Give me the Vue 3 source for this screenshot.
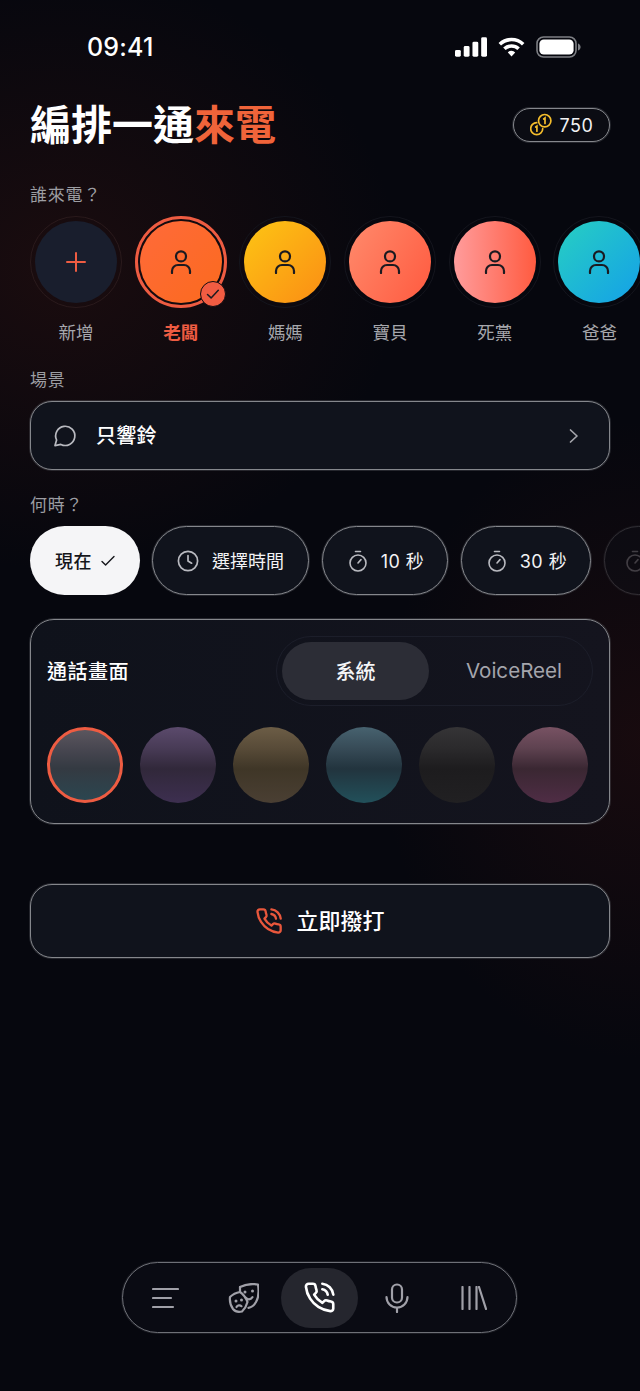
<script setup>
const contacts = [
  { name: '老闆', cls: 'boss', selected: true },
  { name: '媽媽', cls: 'mom' },
  { name: '寶貝', cls: 'baby' },
  { name: '死黨', cls: 'buddy' },
  { name: '爸爸', cls: 'dad' },
]
const timers = ['10 秒', '30 秒']
const swatches = ['teal', 'violet', 'brown', 'sea', 'dark', 'plum']
const phone = 'M22 16.92v3a2 2 0 0 1-2.18 2 19.79 19.79 0 0 1-8.63-3.07 19.5 19.5 0 0 1-6-6 19.79 19.79 0 0 1-3.07-8.67A2 2 0 0 1 4.11 2h3a2 2 0 0 1 2 1.72 12.84 12.84 0 0 0 .7 2.81 2 2 0 0 1-.45 2.11L8.09 9.91a16 16 0 0 0 6 6l1.27-1.27a2 2 0 0 1 2.11-.45 12.84 12.84 0 0 0 2.81.7A2 2 0 0 1 22 16.92zM14.05 2a9 9 0 0 1 8 7.94M14.05 6A5 5 0 0 1 18 10'
</script>

<template>
  <div class="page">
    <!-- status bar -->
    <div class="status">
      <span class="time">09:41</span>
      <div class="status-icons">
        <svg width="32" height="20" viewBox="0 0 33 20" fill="#fff">
          <rect x="0" y="13" width="6" height="7" rx="1.5" />
          <rect x="9" y="9" width="6" height="11" rx="1.5" />
          <rect x="18" y="4.5" width="6" height="15.5" rx="1.5" />
          <rect x="27" y="0" width="6" height="20" rx="1.5" />
        </svg>
        <svg width="27" height="20" viewBox="0 0 27 20" fill="none" stroke="#fff" stroke-width="3.6">
          <path d="M1.8 7.2a17 17 0 0 1 23.4 0" />
          <path d="M6.4 11.8a10.4 10.4 0 0 1 14.2 0" />
          <path d="M13.5 19.4l-3.7-4a5.2 5.2 0 0 1 7.4 0z" fill="#fff" stroke="none" />
        </svg>
        <svg width="45" height="22" viewBox="0 0 45 22" fill="none">
          <rect x="1" y="1" width="39" height="20" rx="6.5" stroke="#7d7f84" stroke-width="1.6" />
          <rect x="3.4" y="3.4" width="34.2" height="15.2" rx="4.4" fill="#fff" />
          <path d="M42 7.5v7c1.6-.5 2.6-2 2.6-3.5S43.6 8 42 7.5z" fill="#7d7f84" />
        </svg>
      </div>
    </div>

    <div class="header">
      <h1 class="title">編排一通<em>來電</em></h1>
      <div class="coins outlined">
        <svg width="24" height="24" viewBox="0 0 24 24" fill="none" stroke="#f4bd2c" stroke-width="1.7" stroke-linecap="round">
          <circle cx="14.7" cy="7.7" r="6.2" />
          <path d="M13.7 6l1.3-1v5.5" />
          <path d="M6.7 9.7A6 6 0 1 0 12.7 15.7" />
          <path d="M5.7 14l1.2-.8v5" />
        </svg>
        <span>750</span>
      </div>
    </div>

    <div class="label who">誰來電？</div>
    <div class="avatars">
      <div class="contact">
        <div class="ring">
          <div class="face add">
            <svg width="22" height="22" viewBox="0 0 22 22" stroke="#ee5c42" stroke-width="2" stroke-linecap="round">
              <path d="M11 2v18M2 11h18" />
            </svg>
          </div>
        </div>
        <span class="name">新增</span>
      </div>
      <div v-for="c in contacts" :key="c.name" class="contact" :class="{ on: c.selected }">
        <div class="ring">
          <div class="face" :class="c.cls">
            <svg width="24" height="24" viewBox="0 0 24 24" fill="none" stroke="#1b1a20" stroke-width="2.2" stroke-linecap="round">
              <circle cx="12" cy="6.4" r="5" />
              <path d="M3 23v-2a6 6 0 0 1 6-6h6a6 6 0 0 1 6 6v2" />
            </svg>
          </div>
          <span v-if="c.selected" class="tick">
            <svg width="16" height="16" viewBox="0 0 16 16" fill="none" stroke="#1b1a20" stroke-width="1.5" stroke-linecap="round" stroke-linejoin="round">
              <path d="M2.5 8.5l3.6 3.4 7.2-7.6" />
            </svg>
          </span>
        </div>
        <span class="name">{{ c.name }}</span>
      </div>
    </div>

    <div class="label scene">場景</div>
    <div class="select outlined">
      <svg width="24" height="24" viewBox="0 0 24 24" fill="none" stroke="#b9bac0" stroke-width="1.7" stroke-linejoin="round">
        <path d="M7.9 20.4A9.6 9.6 0 1 0 3.6 16L2 21.6z" />
      </svg>
      <span class="select-text">只響鈴</span>
      <svg class="chev" width="12" height="16" viewBox="0 0 12 16" fill="none" stroke="#a4a5ab" stroke-width="1.7" stroke-linecap="round" stroke-linejoin="round">
        <path d="M2.5 2l6.5 6-6.5 6" />
      </svg>
    </div>

    <div class="label when">何時？</div>
    <div class="chips">
      <div class="chip now">
        <span class="chip-text">現在</span>
        <svg width="14" height="12" viewBox="0 0 14 12" fill="none" stroke="#16171c" stroke-width="1.4" stroke-linecap="round" stroke-linejoin="round">
          <path d="M1 6.5l3.6 3.6L13 1.6" />
        </svg>
      </div>
      <div class="chip outlined pick">
        <svg width="22" height="22" viewBox="0 0 22 22" fill="none" stroke="#b9bac0" stroke-width="1.7" stroke-linecap="round" stroke-linejoin="round">
          <circle cx="11" cy="11" r="9.6" />
          <path d="M11 5.5V11l3.6 2.2" />
        </svg>
        <span class="chip-text">選擇時間</span>
      </div>
      <div v-for="t in timers" :key="t" class="chip outlined timer">
        <svg width="20" height="22" viewBox="0 0 20 22" fill="none" stroke="#b9bac0" stroke-width="1.6" stroke-linecap="round">
          <circle cx="10" cy="13" r="8" />
          <path d="M7.5 1.5h5M10 13l3-3.4" />
        </svg>
        <span class="chip-text">{{ t }}</span>
      </div>
      <div class="chip outlined faded">
        <svg width="20" height="22" viewBox="0 0 20 22" fill="none" stroke="#b9bac0" stroke-width="1.6" stroke-linecap="round">
          <circle cx="10" cy="13" r="8" />
          <path d="M7.5 1.5h5M10 13l3-3.4" />
        </svg>
      </div>
    </div>

    <div class="card outlined">
      <div class="card-top">
        <span class="card-title">通話畫面</span>
        <div class="segment">
          <span class="seg active"><span class="seg-text">系統</span></span>
          <span class="seg voice"><span class="seg-text">VoiceReel</span></span>
        </div>
      </div>
      <div class="swatches">
        <div v-for="(s, i) in swatches" :key="s" class="swatch" :class="[s, { picked: i === 0 }]"></div>
      </div>
    </div>

    <div class="call outlined">
      <svg width="28" height="28" viewBox="0 0 24 24" fill="none" stroke="#e9573c" stroke-width="2" stroke-linecap="round" stroke-linejoin="round">
        <path :d="phone" />
      </svg>
      <span class="call-text">立即撥打</span>
    </div>

    <nav class="nav">
      <div class="tab">
        <svg width="27" height="22" viewBox="0 0 27 22" stroke="#a0a0a8" stroke-width="2.2" stroke-linecap="round">
          <path d="M1 2h25M1 11h18M1 20h20" />
        </svg>
      </div>
      <div class="tab">
        <svg width="32" height="30" viewBox="0 0 32 30" fill="none" stroke="#a0a0a8" stroke-width="2.2" stroke-linecap="round" stroke-linejoin="round">
          <path d="M13 4C18 1.500 25 .5 31 1.500 32 8 31.500 15 29 19 27 22.500 24 24.500 21.500 24.800" />
          <path d="M13 4v5" />
          <path d="M3 14C6 11 10 9.500 13 9c3 2 6 6 7.500 10-1 4-3 7-5.500 9.500-4 1-7 0-9-2.500C3.500 22.500 2.500 18 3 14z" />
          <path d="M18.500 14.500c2 2.500 5 2.500 7-.3M9.500 24c1-1.800 3.500-2.200 5-.8" />
          <g fill="#a0a0a8" stroke="none">
            <circle cx="18" cy="9" r="1.500" />
            <circle cx="25.500" cy="8" r="1.500" />
            <circle cx="9" cy="18" r="1.500" />
            <circle cx="14.500" cy="17" r="1.500" />
          </g>
        </svg>
      </div>
      <div class="tab active">
        <svg width="33" height="33" viewBox="0 0 24 24" fill="none" stroke="#fff" stroke-width="1.9" stroke-linecap="round" stroke-linejoin="round">
          <path :d="phone" />
        </svg>
      </div>
      <div class="tab">
        <svg width="24" height="30" viewBox="0 0 24 30" fill="none" stroke="#a0a0a8" stroke-width="2.2" stroke-linecap="round">
          <rect x="7" y="1.500" width="10" height="18" rx="5" />
          <path d="M1.500 14a10.500 10.500 0 0 0 21 0M12 24.500v4.500" />
        </svg>
      </div>
      <div class="tab">
        <svg width="26" height="24" viewBox="0 0 26 24" fill="none" stroke="#a0a0a8" stroke-width="2.2" stroke-linecap="round">
          <path d="M1.500 1v22M8.500 1v22M15.500 1v22M18 1l7 22" />
        </svg>
      </div>
    </nav>
  </div>
</template>

<style>
html, body {
  margin: 0;
  background: #06070e;
}
</style>

<style scoped>
.page {
  width: 640px;
  height: 1391px;
  overflow: hidden;
  display: flex;
  flex-direction: column;
  box-sizing: border-box;
  color: #fff;
  font-family: "Inter", "Noto Sans CJK TC", sans-serif;
  background:
    radial-gradient(ellipse 340px 300px at 60px 270px, rgba(74, 24, 16, 0.3), transparent 100%),
    radial-gradient(ellipse 260px 320px at 640px 740px, rgba(80, 22, 16, 0.24), transparent 100%),
    #06070e;
}
.outlined {
  border: 1px solid #85878c;
  box-shadow: 0 0 0 1px rgba(110, 112, 118, 0.3);
}
.status {
  height: 94px;
  flex: none;
  display: flex;
  align-items: center;
  justify-content: space-between;
  padding: 0 59px 0 87px;
}
.time {
  font-size: 25px;
  font-weight: 500;
  letter-spacing: 0.2px;
}
.status-icons {
  display: flex;
  align-items: center;
  gap: 11px;
}
.header {
  height: 62px;
  flex: none;
  display: flex;
  align-items: center;
  justify-content: space-between;
  padding: 0 30px;
}
.title {
  margin: 0;
  font-size: 41px;
  font-weight: 700;
  line-height: 62px;
}
.title em {
  font-style: normal;
  color: #f0643a;
}
.coins {
  height: 34px;
  box-sizing: border-box;
  width: 97px;
  border-radius: 17px;
  display: flex;
  align-items: center;
  justify-content: center;
  gap: 6px;
  font-size: 18px;
  letter-spacing: 0.5px;
  color: #f2f2f4;
  background: #0b0c13;
}
.label {
  font-size: 17px;
  line-height: 24px;
  letter-spacing: 0.8px;
  color: #9c9da2;
  padding-left: 30px;
  flex: none;
}
.who { margin-top: 27px; }
.scene { margin-top: 23px; }
.when { margin-top: 23px; }
.avatars {
  flex: none;
  margin-top: 9px;
  padding-left: 30px;
  display: flex;
  gap: 12.7px;
  overflow: hidden;
}
.contact {
  flex: none;
  width: 92px;
  display: flex;
  flex-direction: column;
  align-items: center;
}
.ring {
  position: relative;
  width: 92px;
  height: 92px;
  box-sizing: border-box;
  border: 1px solid #14151d;
  border-radius: 50%;
  display: flex;
  align-items: center;
  justify-content: center;
}
.contact:first-child .ring { border-color: #2a1a1c; }
.on .ring {
  border: 3px solid #ee5c42;
}
.face {
  width: 82px;
  height: 82px;
  flex: none;
  border-radius: 50%;
  display: flex;
  align-items: center;
  justify-content: center;
}
.add { background: #191e2d; }
.boss { background: linear-gradient(135deg, #ff6a3a, #fb6a1e); }
.mom { background: linear-gradient(135deg, #fdc514, #fb8d14); }
.baby { background: linear-gradient(120deg, #ff8a6c, #ff5a3f); }
.buddy { background: linear-gradient(90deg, #ff9c9c, #ff5b40); }
.dad { background: linear-gradient(135deg, #27cfc2, #14a0e8); }
.tick {
  position: absolute;
  right: -2px;
  bottom: -2px;
  width: 26px;
  height: 26px;
  box-sizing: border-box;
  border-radius: 50%;
  background: #f25c42;
  border: 1px solid #120d12;
  display: flex;
  align-items: center;
  justify-content: center;
}
.name {
  margin-top: 13px;
  font-size: 17.5px;
  line-height: 24px;
  color: #a6a7ac;
}
.on .name {
  color: #ee5c42;
  font-weight: 700;
}
.select {
  flex: none;
  margin: 9px 30px 0;
  height: 69px;
  box-sizing: border-box;
  border-radius: 22px;
  background: #10131c;
  display: flex;
  align-items: center;
  padding: 0 29px 0 22px;
}
.select-text {
  margin: 0 0 2px 19px;
  font-size: 20px;
  font-weight: 500;
  letter-spacing: 0.2px;
}
.chev { margin-left: auto; }
.chips {
  flex: none;
  margin-top: 8px;
  padding: 1px 0 1px 30px;
  display: flex;
  gap: 13px;
  overflow: hidden;
}
.chip {
  flex: none;
  height: 69px;
  box-sizing: border-box;
  border-radius: 35px;
  background: #10131c;
  display: flex;
  align-items: center;
  justify-content: center;
  gap: 13px;
  font-size: 18px;
  color: #f2f2f4;
}
.chip-text {
  margin-bottom: 2px;
  letter-spacing: 0.5px;
}
.now {
  width: 110px;
  background: #f5f5f7;
  color: #15161b;
  gap: 9px;
  font-weight: 500;
  margin-right: -1px;
}
.pick { width: 157px; }
.pick .chip-text { letter-spacing: 0; }
.timer {
  width: 126px;
  padding-left: 2px;
}
.timer + .timer { width: 130px; }
.faded {
  width: 130px;
  opacity: 0.3;
  justify-content: flex-start;
  padding-left: 20px;
}
.card {
  flex: none;
  margin: 23px 30px 0;
  height: 205px;
  box-sizing: border-box;
  border-radius: 24px;
  background: linear-gradient(90deg, #0f121b, #14141e);
  padding: 16px 16px 0;
}
.card-top {
  display: flex;
  align-items: center;
  justify-content: space-between;
}
.card-title {
  margin-bottom: 2px;
  font-size: 20px;
  font-weight: 500;
  letter-spacing: 0.5px;
}
.segment {
  width: 317px;
  height: 70px;
  box-sizing: border-box;
  border: 1px solid #1c1e2a;
  border-radius: 35px;
  padding: 5px;
  display: flex;
  align-items: stretch;
}
.seg {
  flex: 1;
  display: flex;
  align-items: center;
  justify-content: center;
  font-size: 20.6px;
  color: #a4a5ac;
}
.seg-text { margin-bottom: 2px; }
.voice { padding-left: 12px; }
.seg.active {
  flex: none;
  width: 147px;
  border-radius: 29px;
  background: #2c2d36;
  color: #f5f5f7;
  font-size: 20px;
  font-weight: 500;
}
.swatches {
  margin-top: 21px;
  display: flex;
  gap: 17px;
}
.swatch {
  width: 76px;
  height: 76px;
  flex: none;
  box-sizing: border-box;
  border-radius: 50%;
}
.picked { border: 3px solid #ee5c42; }
.teal { background: linear-gradient(#5b565e 0%, #474650 28%, #343a42 55%, #2b4650 100%); }
.violet { background: linear-gradient(#5b4a6c 0%, #483b56 28%, #31283a 55%, #3d2f50 100%); }
.brown { background: linear-gradient(#6c5d46 0%, #584b38 28%, #3f3627 55%, #4a3f33 100%); }
.sea { background: linear-gradient(#47626f 0%, #374b57 28%, #22343e 55%, #22505a 100%); }
.dark { background: linear-gradient(#353436 0%, #2b2a2c 28%, #1d1c1e 55%, #212022 100%); }
.plum { background: linear-gradient(#785263 0%, #5e4250 28%, #3a2732 55%, #4f2d45 100%); }
.call {
  flex: none;
  margin: 60px 30px 0;
  height: 74px;
  box-sizing: border-box;
  border-radius: 22px;
  background: #10131c;
  display: flex;
  align-items: center;
  justify-content: center;
  gap: 13px;
  font-size: 22px;
  font-weight: 500;
}
.call-text { margin-bottom: 4px; }
.nav {
  flex: none;
  margin: auto 123px 58px 122px;
  height: 71px;
  box-sizing: border-box;
  border: 1px solid #6e7077;
  box-shadow: 0 0 0 1px rgba(90, 92, 100, 0.25);
  border-radius: 36px;
  background: #0a0b13;
  display: flex;
  align-items: center;
  justify-content: space-between;
  padding: 0 4px;
}
.tab {
  width: 77px;
  height: 60px;
  display: flex;
  align-items: center;
  justify-content: center;
  border-radius: 30px;
}
.tab.active { background: #25262e; }
</style>
